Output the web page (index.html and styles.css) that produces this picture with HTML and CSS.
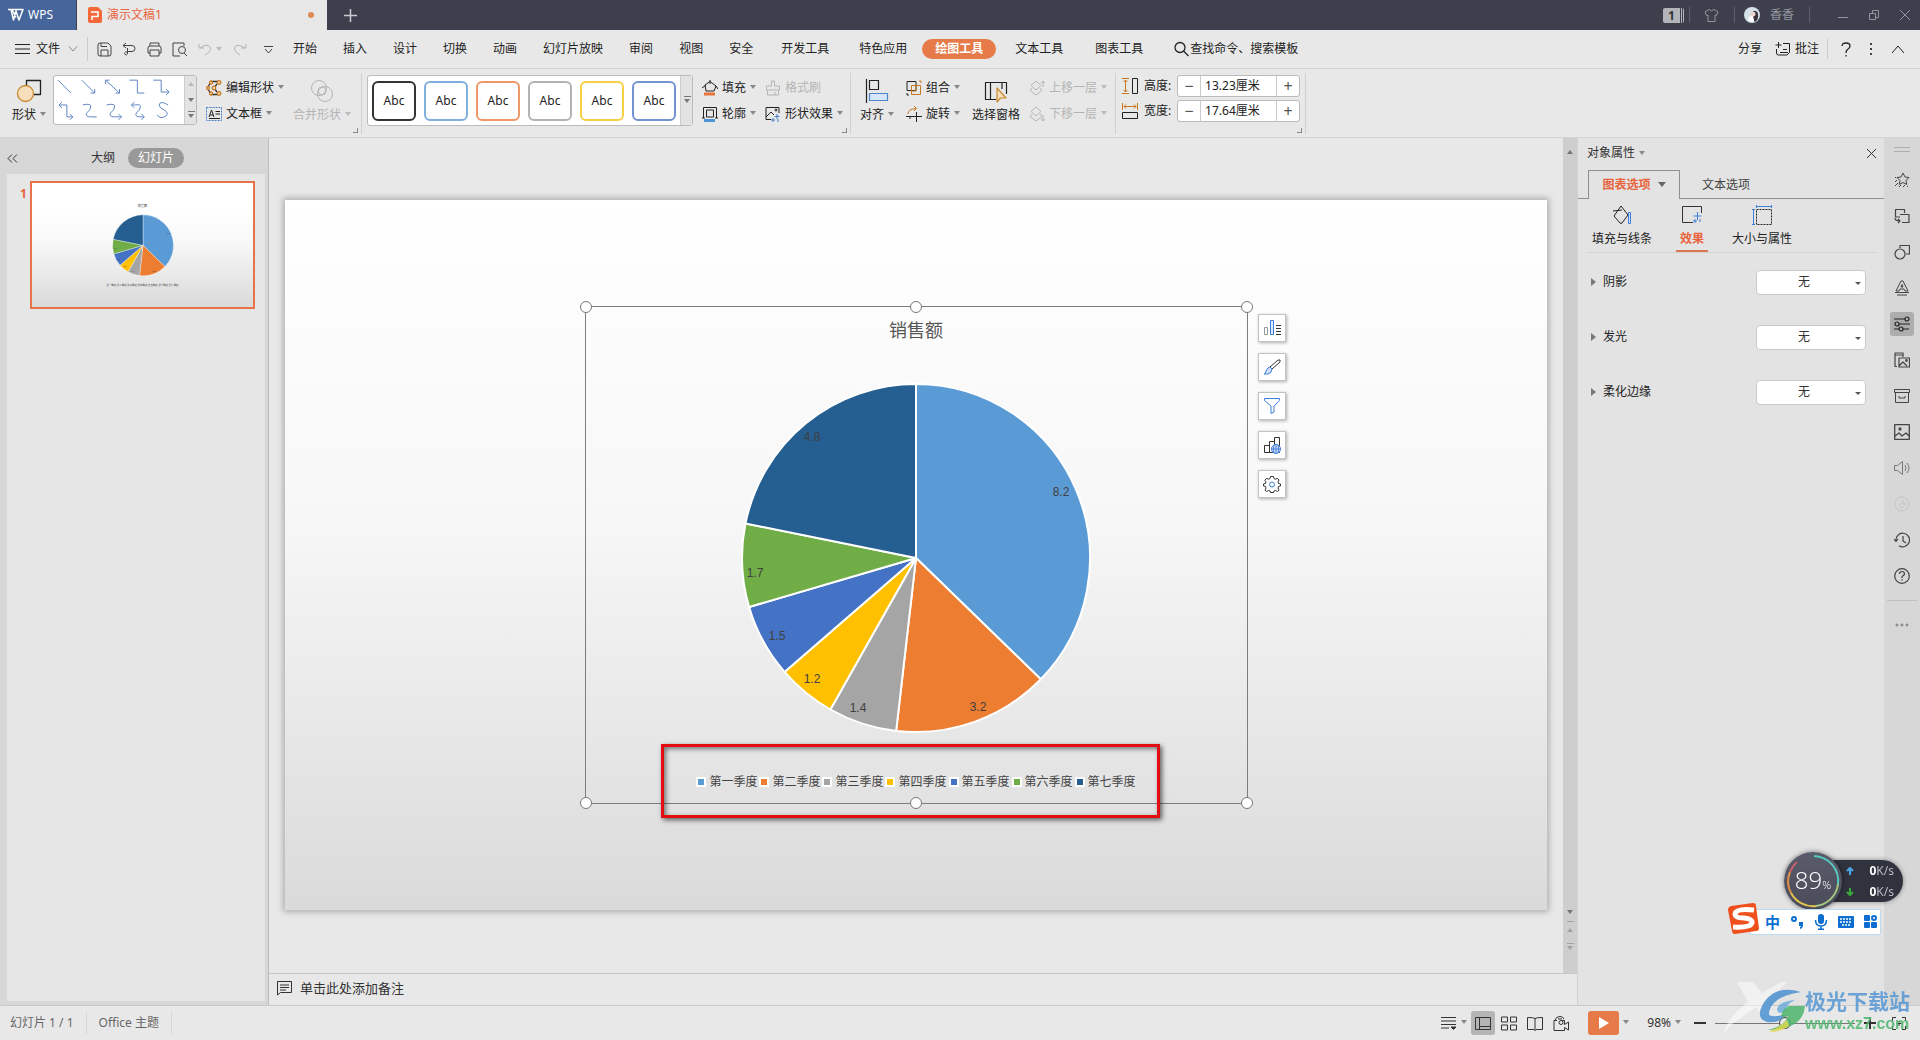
FILE: index.html
```html
<!DOCTYPE html>
<html lang="zh-CN">
<head>
<meta charset="utf-8">
<title>演示文稿1 - WPS</title>
<link rel="stylesheet" href="styles.css">
</head>
<body>
<header class="titlebar">
  <button class="wps"><svg class="i" width="17" height="14" viewBox="0 0 17 14" stroke-width="1.500"><path d="M1 1.500h3L6.500 12 9 3l3 9 4-10.500H5l4 8"/></svg>WPS</button>
  <button class="doc-tab"><svg width="14" height="16" viewBox="0 0 14 16"><path fill="#f5683a" d="M2 0h8l4 4v10a2 2 0 0 1-2 2H2a2 2 0 0 1-2-2V2a2 2 0 0 1 2-2z"/><path d="M4 13V9.500h6V5H3" fill="none" stroke="#fff" stroke-width="1.500"/></svg><span>演示文稿1</span><i class="dirty"></i></button>
  <button class="plus" aria-label="新建"><svg class="i" width="13" height="13" viewBox="0 0 13 13" stroke-width="1.500"><path d="M6.500 0v13M0 6.500h13"/></svg></button>
  <div class="title-right">
    <span class="badge">1</span>
    <button class="skin" aria-label="皮肤"><svg class="i" width="15" height="15" viewBox="0 0 15 15"><path d="M5 1.500 1 4l1.500 3.500 1.500-.5v6.500h7V7l1.500.5L14 4l-4-2.500q-2.500 2.500-5 0z"/></svg></button>
    <button class="user"><svg width="16" height="16" viewBox="0 0 16 16"><circle cx="8" cy="8" r="8" fill="#d5e2ea"/><path d="M9 4q4-1 5 3 1 5-3 8-2-2-2-5z" fill="#3a3239"/><circle cx="9" cy="7" r="2.500" fill="#ead4cb"/><path d="M4 12q2-4 5-3l1 5q-4 2-6-2z" fill="#fff"/></svg>香香</button>
    <button class="win" aria-label="最小化"><svg class="i" width="12" height="12" viewBox="0 0 12 12"><path d="M1 8.500h10"/></svg></button>
    <button class="win" aria-label="还原"><svg class="i" width="12" height="12" viewBox="0 0 12 12"><path d="M1.500 4.500h6v6h-6zM4.500 4V1.500h6v7H8"/></svg></button>
    <button class="win" aria-label="关闭"><svg class="i" width="12" height="12" viewBox="0 0 12 12"><path d="m1 1 10 10M11 1 1 11"/></svg></button>
  </div>
</header>

<nav class="menubar">
  <button class="file"><svg class="i" width="15" height="12" viewBox="0 0 15 12"><path d="M0 1.500h15M0 6h15M0 10.500h15"/></svg>文件<svg class="i dim" width="10" height="6" viewBox="0 0 10 6"><path d="m1 .5 4 4.500L9 .5"/></svg></button>
  <div class="quick">
    <button aria-label="保存"><svg class="i" width="15" height="15" viewBox="0 0 15 15"><path d="M1 3q0-2 2-2h8l3 3v8q0 2-2 2H3q-2 0-2-2zM4 14V8h7v6M4 1v3.500h6"/></svg></button>
    <button aria-label="输出"><svg class="i" width="15" height="15" viewBox="0 0 15 15"><path d="M1 3.500h9a3 3 0 0 1 0 6H5.500M4 1l-3 2.500L4 6M5.500 6v6a1.500 1.500 0 1 1-2-2h2"/></svg></button>
    <button aria-label="打印"><svg class="i" width="15" height="15" viewBox="0 0 15 15"><path d="M3 4V1h9v3M3 11H1V6q0-2 2-2h9q2 0 2 2v5h-2M3 8h9v6H3z"/></svg></button>
    <button aria-label="打印预览"><svg class="i" width="16" height="15" viewBox="0 0 16 15"><path d="M8 14H1V1h11v3M12 11l3 3"/><circle cx="10" cy="8" r="3.500"/></svg></button>
    <button class="off" aria-label="撤销"><svg class="i" width="14" height="14" viewBox="0 0 14 14"><path d="M1 2v4h5M2 6q7-5 10-1 2 4-5 8"/></svg><i class="caret"></i></button>
    <button class="off" aria-label="恢复"><svg class="i" width="14" height="14" viewBox="0 0 14 14"><path d="M13 2v4H8M12 6Q5 1 2 5q-2 4 5 8"/></svg></button>
    <button class="last" aria-label="更多"><svg class="i" width="9" height="9" viewBox="0 0 9 9"><path d="M0 1.500h9M1 4l3.500 4L8 4"/></svg></button>
  </div>
  <div class="tabs">
    <button>开始</button><button>插入</button><button>设计</button><button>切换</button><button>动画</button><button>幻灯片放映</button><button>审阅</button><button>视图</button><button>安全</button><button class="wide">开发工具</button><button class="wide">特色应用</button><button class="current">绘图工具</button><button class="wide">文本工具</button><button class="wide">图表工具</button>
  </div>
  <button class="find"><svg class="i" width="15" height="16" viewBox="0 0 15 16" stroke-width="1.300"><circle cx="6" cy="6.500" r="5"/><path d="m9.500 10 5 5"/></svg>查找命令、搜索模板</button>
  <div class="menu-right">
    <button>分享</button>
    <button><svg class="i" width="16" height="14" viewBox="0 0 16 14"><path d="M3.500 0v6M.5 3h6M1.500 7v4q0 2 2 2H12l2.500-2.500V1.500H8M5 10.500h8M8 7.500h4"/></svg>批注</button>
    <span class="vline"></span>
    <button aria-label="帮助"><svg class="i" width="10" height="15" viewBox="0 0 10 15" stroke-width="1.300"><path d="M1 4q0-3 4-3t4 3q0 2-2.500 3.500Q5 8.500 5 11M5 13v1.500"/></svg></button>
    <button aria-label="更多"><svg width="4" height="14" viewBox="0 0 4 14" fill="#444"><path d="M1 1h2v2H1zM1 6h2v2H1zM1 11h2v2H1z"/></svg></button>
    <button aria-label="收起"><svg class="i" width="14" height="9" viewBox="0 0 14 9"><path d="m1 8 6-7 6 7"/></svg></button>
  </div>
</nav>

<section class="ribbon">
  <div class="group g1">
    <button class="big"><svg class="i" width="26" height="24" viewBox="0 0 26 24" stroke-width="1.300"><path d="M10.500 1.500h14v14h-14z"/><circle cx="9.500" cy="14.500" r="8" fill="#f6dfba" stroke="#c8892f"/></svg><span>形状<i class="caret"></i></span></button>
    <div class="lines">
      <svg class="i" viewBox="0 0 131 48">
        <path d="m4 4 13 13M28 4l13 13v-4m0 4h-4M52 8V4h4m-4 0 14 13h-4m4 0v-4M76 4h8v13h7M100 4h8v12h8m-3-3 3 3-3 3"/>
        <path d="M5 29h8v12h6m-3-3 3 3-3 3M8 26l-3 3 3 3M29 29q9-2 8 2 0 3-4 6-2 4 4 4h6M53 29q9-2 8 2 0 3-4 6-2 4 4 4h7m-3-3 3 3-3 3M78 29h4q6-1 5 2 0 3-4 6-2 4 4 4h4m-3-3 3 3-3 3M81 26l-3 3 3 3M115 29q-8-5-9 0 0 3 5 5 5 3 2 6-6 4-9-1"/>
      </svg>
      <span class="spin3"><i class="tri up"></i><i class="tri"></i><i class="tri bar"></i></span>
    </div>
    <div class="col">
      <button class="tb"><svg class="i" width="16" height="16" viewBox="0 0 16 16" stroke="#c8791f" stroke-width="1.300"><path d="M12 1.500H5L1.500 8 5 14.500h7M11 4 8 8l3 4" stroke="#333"/><g fill="#f6dfba"><circle cx="13" cy="2.500" r="1.800"/><circle cx="8" cy="8" r="1.800"/><circle cx="13" cy="13.500" r="1.800"/><circle cx="2" cy="8" r="1.500"/><circle cx="5" cy="2.500" r="1.500"/><circle cx="5" cy="13.500" r="1.500"/></g></svg>编辑形状<i class="caret"></i></button>
      <button class="tb"><svg class="i" width="16" height="14" viewBox="0 0 16 14"><path stroke="#4a7cc9" stroke-dasharray="2 1" d="M.5.5h15v13H.5z"/><path d="M3 10l2.500-7L8 10M4 8h3M9.500 4.500H14M9.500 7H14M3 11.500h11"/></svg>文本框<i class="caret"></i></button>
    </div>
    <button class="big off"><svg class="i" width="24" height="24" viewBox="0 0 24 24"><circle cx="9" cy="9" r="7.500"/><circle cx="15" cy="15" r="7.500"/><circle cx="12" cy="12" r="4"/></svg><span>合并形状<i class="caret"></i></span></button>
    <i class="corner"></i>
  </div>
  <div class="group g2">
    <div class="styles">
      <button class="s-black">Abc</button><button class="s-blue">Abc</button><button class="s-orange">Abc</button><button class="s-gray">Abc</button><button class="s-gold">Abc</button><button class="s-navy">Abc</button>
      <span class="more"><i class="tri bar"></i></span>
    </div>
    <div class="col">
      <button class="tb"><svg class="i" width="16" height="16" viewBox="0 0 16 16"><path d="M8 1.500 3 5l1 6h8l2-5zM0 8l4-3M8 0v4M14 6l2 3"/><path stroke="#e8743c" stroke-width="3" d="M2 14h11"/></svg>填充<i class="caret"></i></button>
      <button class="tb"><svg class="i" width="16" height="16" viewBox="0 0 16 16"><path d="M1.500 12V1.500h13V12M4.500 11V4h7v7zM0 12h3M13 12h3"/><path stroke="#4d94d4" stroke-width="3" d="M2 14.500h11"/></svg>轮廓<i class="caret"></i></button>
    </div>
    <div class="col">
      <button class="tb off"><svg class="i" width="16" height="16" viewBox="0 0 16 16"><path d="M6.500 1h3v5h5v4h-13V6h5zM2.500 10v5h11v-5M10 15v-3"/></svg>格式刷</button>
      <button class="tb"><svg class="i" width="16" height="16" viewBox="0 0 16 16"><path d="M6 13.500H1v-12h13V7M1 11l5-5 3 3"/><circle cx="11" cy="4" r="1"/><path stroke="#4a7cc9" d="M12 8v5M9.500 10.500h5M8 12v4M6 14h4M13 13v3"/></svg>形状效果<i class="caret"></i></button>
    </div>
    <i class="corner"></i>
  </div>
  <div class="group g3">
    <button class="big"><svg class="i" width="24" height="24" viewBox="0 0 24 24" stroke-width="1.200"><path d="M1.500 0v24M4.500 1.500h9v9h-9z"/><path fill="#d7e6f8" stroke="#4a86c9" d="M4.500 14.500h18v7h-18z"/></svg><span>对齐<i class="caret"></i></span></button>
    <div class="col">
      <button class="tb"><svg class="i" width="16" height="16" viewBox="0 0 16 16"><path d="M1 1.500h9v9H1zM1 13v2h2"/><path stroke="#c8791f" d="M5.500 5.500h9v9h-9zM5 11h5V6M13 1h2v2"/></svg>组合<i class="caret"></i></button>
      <button class="tb"><svg class="i" width="16" height="16" viewBox="0 0 16 16"><path stroke="#c8791f" d="M2 8q0-5 8-5.500M8 0l2.500 2.500L8 5"/><path d="M0 10.500h16M10.500 6v10M4 10v3"/></svg>旋转<i class="caret"></i></button>
    </div>
    <button class="big"><svg class="i" width="24" height="24" viewBox="0 0 24 24" stroke-width="1.200"><path d="M12 20.500H1.500v-17h21V15M6.500 4v16M18 4v6"/><path fill="#f6dfba" stroke="#c8892f" d="M13 9v14l3.500-4H22z"/></svg><span>选择窗格</span></button>
    <div class="col">
      <button class="tb off"><svg class="i" width="16" height="16" viewBox="0 0 16 16"><path d="m7 1 5 4.500L7 10 2 5.500zM3 8l-2 2.500L7 15l6-4.500L11 8M14 7V1m-2 2 2-2 2 2"/></svg>上移一层<i class="caret"></i></button>
      <button class="tb off"><svg class="i" width="16" height="16" viewBox="0 0 16 16"><path d="m7 1 5 4.500L7 10 2 5.500zM3 8l-2 2.500L7 15l6-4.500L11 8M14 9v6m-2-2 2 2 2-2"/></svg>下移一层<i class="caret"></i></button>
    </div>
  </div>
  <div class="group g4">
    <div class="size"><svg class="i" width="16" height="16" viewBox="0 0 16 16"><path stroke="#c8791f" d="M0 .5h7M0 15.500h7M3.500 2v12M1.500 4l2-2 2 2m-4 8 2 2 2-2"/><path d="M10.500.5h5v15h-5z"/></svg><label for="h">高度:</label><span class="spin"><button>−</button><input id="h" value="13.23厘米"><button>+</button></span></div>
    <div class="size"><svg class="i" width="16" height="16" viewBox="0 0 16 16"><path stroke="#c8791f" d="M.5 0v7M15.500 0v7M2 3.500h12M4 1.500l-2 2 2 2m8-4 2 2-2 2"/><path d="M.5 9.500h15v6H.5z"/></svg><label for="w">宽度:</label><span class="spin"><button>−</button><input id="w" value="17.64厘米"><button>+</button></span></div>
    <i class="corner"></i>
  </div>
</section>

<main class="work">
  <aside class="outline">
    <div class="outline-head">
      <button aria-label="收起"><svg class="i" width="11" height="9" viewBox="0 0 11 9"><path d="m5 .5-4 4 4 4m5-8-4 4 4 4"/></svg></button>
      <button class="outl">大纲</button><button class="pill">幻灯片</button>
    </div>
    <div class="thumbs">
      <span class="num">1</span>
      <svg class="thumb" viewBox="0 0 1262 710">
        <text x="631" y="137" font-size="18" text-anchor="middle">销售额</text>
        <use href="#pie" x="634" y="356"/>
        <text x="631" y="587" font-size="14" text-anchor="middle">第一季度 第二季度 第三季度 第四季度 第五季度 第六季度 第七季度</text>
      </svg>
    </div>
  </aside>

  <section class="center">
    <div class="editor">
      <div class="stage">
        <div class="slide">
          <div class="chart">
            <h1>销售额</h1>
            <svg class="pie" viewBox="-176 -176 352 352">
              <g id="pie">
                <g stroke="#fff" stroke-width="2" stroke-linejoin="round">
                  <path fill="#5b9bd5" d="M0 0V-174A174 174 0 0 1 124.800 121.300z"/>
                  <path fill="#ed7d31" d="M0 0 124.800 121.300A174 174 0 0 1-19.800 172.900z"/>
                  <path fill="#a5a5a5" d="M0 0-19.800 172.900A174 174 0 0 1-85.600 151.500z"/>
                  <path fill="#ffc000" d="M0 0-85.600 151.500A174 174 0 0 1-131.500 113.900z"/>
                  <path fill="#4472c4" d="M0 0-131.500 113.900A174 174 0 0 1-166.900 49z"/>
                  <path fill="#70ad47" d="M0 0-166.900 49A174 174 0 0 1-170.500-34.600z"/>
                  <path fill="#255e91" d="M0 0-170.500-34.600A174 174 0 0 1 0-174z"/>
                </g>
                <g class="vals"><text x="145" y="-62">8.2</text><text x="62" y="153">3.2</text><text x="-58" y="154">1.4</text><text x="-104" y="125">1.2</text><text x="-139" y="82">1.5</text><text x="-161" y="19">1.7</text><text x="-104" y="-117">4.8</text></g>
              </g>
            </svg>
            <ul class="legend"><li class="c1">第一季度</li><li class="c2">第二季度</li><li class="c3">第三季度</li><li class="c4">第四季度</li><li class="c5">第五季度</li><li class="c6">第六季度</li><li class="c7">第七季度</li></ul>
            <i class="hd tl"></i><i class="hd tc"></i><i class="hd tr"></i><i class="hd bl"></i><i class="hd bc"></i><i class="hd br"></i>
            <div class="mark"></div>
            <div class="chart-tools">
              <button aria-label="图表元素"><svg class="i" width="18" height="18" viewBox="0 0 18 18"><path stroke="#999" d="M1.500 8.500h3v7h-3z"/><path stroke="#3f7ed8" fill="#dce9fb" d="M7.500 1.500h3v14h-3z"/><path d="M13 6.500h5M13 9.500h5M13 12.500h5M13 15.500h5"/></svg></button>
              <button aria-label="图表样式"><svg class="i" width="18" height="18" viewBox="0 0 18 18"><path d="m7 9 8-7q3-1 2 2l-8 7z"/><path stroke="#3f7ed8" fill="#cfe0f8" d="M1 16q2-1 2-3 2-4 4-4l2 2q0 4-4 5z"/></svg></button>
              <button aria-label="筛选"><svg class="i" width="18" height="18" viewBox="0 0 18 18" stroke="#3f7ed8"><path d="M1.500 1.500h15v2L11 9v6l-3 1.500V9L1.500 3.500z"/></svg></button>
              <button aria-label="图表类型"><svg class="i" width="18" height="18" viewBox="0 0 18 18"><path d="M1.500 9.500h5v7h-5zM6.500 5.500h5v11h-5zM11.500 1.500h5v15h-5z"/><g stroke="#3f7ed8"><circle cx="13" cy="13" r="4.500" fill="#dce9fb"/><path d="M8.500 13h9M13 8.500v9M11 9q-1 4 0 8M15 9q1 4 0 8"/></g></svg></button>
              <button aria-label="设置"><svg class="i" width="18" height="18" viewBox="0 0 18 18"><path d="m7.500 1.500-.5 2-1.500.7-2-.9-1.700 2L3 7l-.5 1.500-2 .5v2l2 .5.5 1.500-1 2 1.500 1.500 2-1 1.500.5.500 1.500h3l.5-1.500 1.500-.5 2 1 1.500-1.500-1-2 .5-1.500 2-.5V9l-2-.5L15 7l1-2-1.500-1.700-2 .9-1.500-.7-.5-2z"/><circle cx="9" cy="9.500" r="2.500" stroke="#3f7ed8"/></svg></button>
            </div>
          </div>
        </div>
      </div>
      <div class="scroll"><i class="tri up"></i><span><i class="tri"></i><i class="tri bar up lite"></i><i class="tri bar lite"></i></span></div>
    </div>
    <div class="notes"><svg class="i" width="17" height="16" viewBox="0 0 17 16"><path d="M1.500 15V1.500h14v11h-11zM4 5h9M4 7.500h9M4 10h6"/></svg>单击此处添加备注</div>
  </section>

  <aside class="props">
    <div class="props-head"><span>对象属性<i class="caret"></i></span><button aria-label="关闭"><svg class="i" width="11" height="11" viewBox="0 0 11 11"><path d="m1 1 9 9m0-9-9 9"/></svg></button></div>
    <div class="ptabs"><button class="on">图表选项<i class="caret"></i></button><button>文本选项</button></div>
    <div class="picons">
      <button><svg class="i" width="20" height="20" viewBox="0 0 20 20"><path d="m9 1 7 9-6 8q-1 1-2 0L2 11zM1 6l9-1"/><path stroke="#3f7ed8" fill="#cfe0f8" d="M16.500 7.500h2v11h-2z"/></svg>填充与线条</button>
      <button class="on"><svg class="i" width="20" height="20" viewBox="0 0 20 20"><path stroke="#333" d="M11 17.500H.5v-16h19V8"/><path stroke="#3f7ed8" d="M15.500 7v8M11.500 11h8M13 14v4M11 16h4M18 14v3"/></svg>效果</button>
      <button><svg class="i" width="20" height="20" viewBox="0 0 20 20"><path stroke-dasharray="2 1" d="M4.500 4.500h15v15h-15z"/><path stroke="#3f7ed8" d="M4.500 1.500h15M4.500 0v3M19.500 0v3M1.500 4.500v15M0 4.500h3M0 19.500h3"/></svg>大小与属性</button>
    </div>
    <div class="prow"><label for="p1">阴影</label><span class="sel"><select id="p1"><option>无</option></select></span></div>
    <div class="prow"><label for="p2">发光</label><span class="sel"><select id="p2"><option>无</option></select></span></div>
    <div class="prow"><label for="p3">柔化边缘</label><span class="sel"><select id="p3"><option>无</option></select></span></div>
  </aside>

  <aside class="rail">
    <i class="grip"></i>
    <button aria-label="新建"><svg class="i" width="16" height="16" viewBox="0 0 16 16"><path d="m9 1 2 4 4 .5-3 3 .7 4L9 10.500 5.300 12.500l.7-4-3-3L7 5zM1 10l2-2M1 14l3-3M5 15l2-2M9 15l2-2M13 15l1-1M1 6l1-1"/></svg></button>
    <button aria-label="切换"><svg class="i" width="16" height="16" viewBox="0 0 16 16" stroke-width="1.200"><path d="M6 9H1.500V1.500h9V5M6 6.500h9v8H8M1 10q0 3 5 3M4 11l2 2-2 2"/></svg></button>
    <button aria-label="形状"><svg class="i" width="16" height="16" viewBox="0 0 16 16" stroke-width="1.200"><circle cx="6" cy="10" r="5"/><path d="M6 4V1.500h9.500V10H12"/></svg></button>
    <button aria-label="艺术字"><svg class="i" width="16" height="16" viewBox="0 0 16 16"><path d="M2 11 7 1h2l5 10h-3l-1-2H6l-1 2zM7 7h2L8 4.500zM1 12.500h14M3 15h10"/></svg></button>
    <button class="on" aria-label="属性"><svg class="i" width="16" height="16" viewBox="0 0 16 16" stroke-width="1.200"><path d="M0 3h11M5 8h11M0 13h5M9 13h6"/><circle cx="13" cy="3" r="2"/><circle cx="3" cy="8" r="2"/><circle cx="7" cy="13" r="2"/></svg></button>
    <button aria-label="素材"><svg class="i" width="16" height="16" viewBox="0 0 16 16" stroke-width="1.200"><path d="M3 14.500H1V1h8v4M1 3h8M5 6h10.500v9H5zM5 14l4-4 4 4"/><circle cx="12.500" cy="8.500" r=".8"/></svg></button>
    <button aria-label="归档"><svg class="i" width="16" height="16" viewBox="0 0 16 16"><path d="M.5 1.500h15v3H.5zM1.500 4.500v10h13v-10M5 8v2h6V8"/></svg></button>
    <button aria-label="图片"><svg class="i" width="16" height="16" viewBox="0 0 16 16" stroke-width="1.300"><path d="M.7.7h14.600v14.600H.7zM1 12l4-3 3 3 4-3 3 3"/><circle cx="6" cy="5" r="1"/></svg></button>
    <button class="mid" aria-label="声音"><svg class="i" width="16" height="16" viewBox="0 0 16 16"><path d="M.5 5.500h3l5-4v13l-5-4h-3zM11 5q2 3 0 6M13 3q4 5 0 10"/></svg></button>
    <button class="off" aria-label="动画"><svg class="i" width="16" height="16" viewBox="0 0 16 16"><circle cx="8" cy="8" r="7"/><path d="m8 4 4 4-4 4-3-3 3-3 2 2"/></svg></button>
    <button aria-label="历史"><svg class="i" width="16" height="16" viewBox="0 0 16 16" stroke-width="1.200"><path d="M2 9a6.800 6.800 0 1 1 3 4.700M0 7l2 2.500L4 7M9 4v5l3 2"/></svg></button>
    <button aria-label="帮助"><svg class="i" width="16" height="16" viewBox="0 0 16 16" stroke-width="1.200"><circle cx="8" cy="8" r="7.300"/><path d="M5.500 6q0-2.500 2.500-2.500T10.500 6Q10.500 7 8 8.500V10M8 11v1.500"/></svg></button>
    <i class="rule"></i>
    <button class="mid" aria-label="更多"><svg class="i" width="14" height="4" viewBox="0 0 14 4"><circle cx="2" cy="2" r="1"/><circle cx="7" cy="2" r="1"/><circle cx="12" cy="2" r="1"/></svg></button>
  </aside>
</main>

<footer class="status">
  <span class="cell">幻灯片 1 / 1</span><span class="cell">Office 主题</span>
  <div class="status-right">
    <button class="dd" aria-label="备注"><svg class="i" width="16" height="14" viewBox="0 0 16 14"><path d="M0 1.500h15M0 5h15M0 8.500h15M0 12h8"/><path fill="#333" d="M10 11h5l-2.500 2.500z"/></svg><i class="caret"></i></button>
    <button class="view on" aria-label="普通"><svg class="i" width="16" height="15" viewBox="0 0 16 15"><path d="M.5 1.500h15v12H.5zM4.500 1.500v12M4.500 10.500h11"/></svg></button>
    <button class="view" aria-label="浏览"><svg class="i" width="16" height="15" viewBox="0 0 16 15"><path d="M.5 1h6v5h-6zM9.500 1h6v5h-6zM.5 9h6v5h-6zM9.500 9h6v5h-6z"/></svg></button>
    <button class="view" aria-label="阅读"><svg class="i" width="16" height="15" viewBox="0 0 16 15"><path d="M8 2.500q-1-1-7.500-1v12H7l1 1 1-1h6.500v-12q-6.500 0-7.500 1v12"/></svg></button>
    <button class="view" aria-label="录制"><svg class="i" width="17" height="15" viewBox="0 0 17 15"><path d="M4 4.500H1v10h10.500v-3l4 2.500V6l-4 2.500v-4H9M2 4q1-3.500 5-3.500 3 0 4 2.500M5 3h4"/><circle cx="8" cy="6.500" r="2"/></svg></button>
    <button class="play" aria-label="放映"><svg width="10" height="12" viewBox="0 0 10 12"><path fill="#fff" d="M0 0v12l10-6z"/></svg></button><i class="caret"></i>
    <button class="pct">98%<i class="caret"></i></button>
    <button aria-label="缩小"><svg class="i" width="12" height="12" viewBox="0 0 12 12" stroke-width="2"><path d="M0 6h12"/></svg></button>
    <input class="zoom" type="range" min="10" max="186" value="98" aria-label="缩放">
    <button aria-label="放大"><svg class="i" width="12" height="12" viewBox="0 0 12 12" stroke-width="2"><path d="M0 6h12M6 0v12"/></svg></button>
    <button class="fit" aria-label="适应窗口"><svg class="i" width="14" height="13" viewBox="0 0 14 13"><path d="M.5 4V.5H4M10 .5h3.500V4M13.500 9v3.500H10M4 12.500H.5V9M7 4v5M4.500 6.500h5"/></svg></button>
  </div>
</footer>

<div class="meter">
  <div class="speed"><span><svg class="i" width="8" height="8" viewBox="0 0 8 8" stroke="#4aa6e8" stroke-width="2"><path d="M4 8V1M1 4l3-3 3 3"/></svg><b>0</b>K/s</span><span><svg class="i" width="8" height="8" viewBox="0 0 8 8" stroke="#3aa83a" stroke-width="2"><path d="M4 0v7M1 4l3 3 3-3"/></svg><b>0</b>K/s</span></div>
  <div class="dial"><svg width="58" height="58" viewBox="-29 -29 58 58" fill="none" stroke-width="2"><path stroke="#58c7bd" d="M1-25A25 25 0 0 1 25 3"/><path stroke="#a3c982" d="M25 3A25 25 0 0 1 3 25"/><path stroke="#e2c64f" d="M3 25A25 25 0 0 1-22 12"/><path stroke="#e29049" d="M-22 12A25 25 0 0 1-23-9"/><path stroke="#c7606a" d="M-23-9A25 25 0 0 1-16-19"/></svg><span>89<small>%</small></span></div>
</div>
<div class="ime">
  <svg class="sogou" width="32" height="32" viewBox="0 0 32 32"><path fill="#f0501e" d="M3 3 25 0q3 0 3 3l3 22q0 3-3 3L7 31q-3 0-3-3L0 7q0-3 3-4z"/><path fill="none" stroke="#fff" stroke-width="5" d="M26 7Q8 5 7 11q0 4 9 4 9 1 8 5-2 5-19 4"/></svg>
  <b>中</b>
  <svg width="14" height="14" viewBox="0 0 14 14"><circle cx="4" cy="4" r="2" fill="none" stroke="#0b6ed0" stroke-width="2"/><path fill="#0b6ed0" d="M9 7h4v3q0 3-3 4v-2q1 0 1-1H9z"/></svg>
  <svg width="14" height="16" viewBox="0 0 14 16"><rect x="4" y="0" width="6" height="10" rx="3" fill="#0b6ed0"/><path fill="none" stroke="#0b6ed0" stroke-width="1.500" d="M1.500 6q0 6 5.500 6t5.500-6M7 12v3M4 15.200h6"/></svg>
  <svg width="16" height="12" viewBox="0 0 16 12"><rect width="16" height="12" rx="1" fill="#0b6ed0"/><path stroke="#fff" stroke-width="1.500" stroke-dasharray="2 1" d="M2 3h12M2 6h12M4 9h8"/></svg>
  <svg width="14" height="14" viewBox="0 0 14 14" fill="#0b6ed0"><rect width="6" height="6" rx="1"/><rect y="7" width="6" height="6" rx="1"/><rect x="7" y="7" width="6" height="6" rx="1"/><circle cx="10" cy="3" r="2" fill="none" stroke="#0b6ed0" stroke-width="2"/></svg>
</div>
<div class="brand">
  <svg width="82" height="54" viewBox="0 0 82 54"><path fill="#fff" opacity=".5" d="M14 2h16l9 11L58 2h6L44 22l4 12H38l-5-7L12 42Q6 46 1 54q2-16 24-32z"/><path fill="#4a8fd0" opacity=".85" d="M78 12Q52 4 40 24q-8 14 4 18 14 2 18-8-10 4-16 1 0-18 32-23z"/><path fill="#65a9d8" opacity=".8" d="M72 20q-18 2-18 10 2 6 10 0-2-5 8-10z"/><path fill="#4db56a" opacity=".85" d="M66 26h16q-2 24-38 24 18-4 21-14-3 2-7 0 2-8 8-10z"/><path fill="#e3d84c" opacity=".8" d="M46 52q12-6 18-12l2 6q-8 6-20 6z"/></svg>
  <div><strong>极光下载站</strong><em>www.xz7.com</em></div>
</div>
</body>
</html>
```
FILE: styles.css
```css
*, *::before, *::after { box-sizing: border-box; }
body { margin: 0; height: 100vh; display: flex; flex-direction: column; overflow: hidden; background: #e8e8e8; color: #333; font: 12px/18px "Noto Sans", "Noto Sans CJK SC", sans-serif; }
button { margin: 0; padding: 0; border: 0; background: none; color: inherit; font: inherit; white-space: nowrap; display: flex; align-items: center; justify-content: center; }
svg { flex: none; display: block; }
.i { fill: none; stroke-linejoin: round; }
.i:not([stroke]) { stroke: currentColor; }
.off { color: #b5b5b5; }
.caret { display: inline-block; flex: none; border: 3px solid transparent; border-top: 4px solid #888; border-bottom: 0; margin: 0 0 2px 4px; }
.off .caret { border-top-color: #bbb; }
.tri { width: 0; height: 0; border: 3px solid transparent; border-top: 4px solid #777; border-bottom: 0; }
.tri.up { border-top: 0; border-bottom: 4px solid #777; }
.tri.bar { position: relative; }
.tri.bar::before { content: ""; position: absolute; left: -3px; top: -7px; width: 7px; height: 1px; background: #777; }

.titlebar { display: flex; height: 30px; background: #3d404c; color: #b5b8c0; flex: none; }
.wps { width: 76px; background: #46659b; color: #fff; gap: 4px; padding-right: 16px; margin-right: 1px; }
.doc-tab { width: 250px; background: #e8e8e8; color: #e8643c; gap: 5px; padding: 0 13px 0 11px; }
.doc-tab span { flex: 1; text-align: left; }
.dirty { width: 6px; height: 6px; border-radius: 3px; background: #dc8b55; }
.plus { width: 46px; color: #c9cbd0; }
.title-right { margin-left: auto; display: flex; align-items: center; color: #92959d; }
.badge { width: 21px; height: 15px; line-height: 15px; background: linear-gradient(90deg, #b3b5bb 17px, #3d404c 17px 18px, #b3b5bb 18px 19px, #3d404c 19px 20px, #b3b5bb 20px); color: #333; padding-left: 5px; border-radius: 2px; font-weight: bold; }
.skin { width: 46px; height: 16px; margin-left: 5px; border: solid #5c5f6a; border-width: 0 1px; }
.user { height: 16px; gap: 10px; padding: 0 15px 0 9px; border-right: 1px solid #5c5f6a; margin-right: 17px; }
.win { width: 31px; }

.menubar { display: flex; height: 39px; border-bottom: 1px solid #d3d3d3; flex: none; align-items: center; color: #222; }
.file { gap: 6px; padding: 0 9px 0 15px; height: 24px; border-right: 1px solid #ccc; }
.dim { color: #888; margin-left: 2px; }
.quick { display: flex; padding-left: 9px; color: #444; width: 192px; gap: 10px; }
.quick .caret { margin: 0 0 0 4px; }
.quick .off + .off { margin-left: 1px; }
.quick .last { margin-left: 7px; }
.tabs { display: flex; align-items: center; }
.tabs button { padding: 0 13px; height: 20px; }
.tabs .wide { padding: 0 15px; }
.tabs .current { background: #e67a48; color: #fff; font-weight: bold; border-radius: 10px; margin-right: 4px; }
.tabs .current + .wide { margin-right: 2px; }
.find { margin-left: 16px; gap: 1px; }
.menu-right { margin-left: auto; display: flex; align-items: center; padding-right: 15px; gap: 13px; }
.menu-right button { gap: 4px; }
.menu-right button:nth-last-child(-n+2) { margin-left: 5px; }
.vline { width: 1px; height: 20px; background: #ccc; margin-left: -5px; }

.ribbon { display: flex; height: 68px; color: #222; flex: none; }
.group { position: relative; display: flex; padding: 0 8px; }
.group::after { content: ""; position: absolute; right: 0; top: 4px; bottom: 3px; width: 1px; background: #d0d0d0; }
.corner { position: absolute; right: 4px; bottom: 4px; width: 5px; height: 5px; border: solid #888; border-width: 0 1px 1px 0; }
.big { flex-direction: column; gap: 3px; height: 54px; margin-top: 10px; justify-content: flex-start; }
.big span { display: flex; align-items: center; }
.col { display: flex; flex-direction: column; gap: 8px; padding-top: 10px; align-items: flex-start; }
.tb { height: 18px; gap: 4px; }
.tb .caret { margin-left: 0; }
.g1 .big { width: 42px; margin-right: 3px; }
.g1 .big.off { width: 60px; margin: 10px 2px 0 8px; }
.lines { display: flex; width: 144px; height: 50px; margin: 6px 9px 0 0; border: 1px solid #bbb; border-radius: 3px; background: #fff; color: #6186c4; overflow: hidden; }
.lines svg { width: 130px; height: 48px; }
.spin3 { width: 12px; background: #e3e3e3; border-left: 1px solid #ccc; display: flex; flex-direction: column; align-items: center; justify-content: space-around; }
.spin3 .tri.up { opacity: .4; }
.g2 { padding-left: 5px; gap: 9px; }
.styles { display: flex; width: 326px; height: 51px; margin-top: 6px; border: 1px solid #bbb; border-radius: 3px; background: #fff; padding: 5px 0 0 4px; gap: 8px; }
.styles button { width: 44px; height: 40px; border: 2px solid; border-radius: 6px; flex: none; }
.styles .s-black { border-color: #333; }
.styles .s-blue { border-color: #7fb0e0; }
.styles .s-orange { border-color: #ec9868; }
.styles .s-gray { border-color: #b3b3b3; }
.styles .s-gold { border-color: #f8ce45; }
.styles .s-navy { border-color: #7494d1; }
.more { margin: -5px 0 0 -4px; background: #e3e3e3; border-left: 1px solid #ccc; display: flex; align-items: center; justify-content: center; flex: 1; }
.g3 { padding: 0 9px 0 3px; }
.g3 .big { width: 46px; margin-right: 6px; }
.g3 .col + .big { width: 54px; margin: 10px 6px 0 9px; }
.g4 { flex-direction: column; padding: 6px 6px 0; gap: 3px; }
.size { display: flex; align-items: center; height: 22px; }
.size label { width: 33px; margin-left: 6px; }
.spin { display: flex; width: 123px; height: 22px; border: 1px solid #bbb; border-radius: 3px; background: #fff; }
.spin button { width: 22px; font-size: 16px; color: #555; }
.spin input { flex: 1; min-width: 0; border: solid #ccc; border-width: 0 1px; padding: 0 4px; font: inherit; color: inherit; background: none; }

.work { flex: 1; min-height: 0; display: flex; border-top: 1px solid #d4d4d4; }
.outline { width: 269px; flex: none; background: #d7d7d7; border-right: 1px solid #bdbdbd; display: flex; flex-direction: column; padding: 0 3px 4px 7px; }
.outline-head { display: flex; align-items: center; height: 36px; padding-top: 4px; flex: none; }
.outline-head .outl { margin: 0 13px 0 73px; }
.pill { width: 56px; height: 20px; border-radius: 10px; background: #999; color: #fff; }
.thumbs { flex: 1; background: #e6e6e6; padding: 7px 10px 0 13px; display: flex; align-items: flex-start; }
.num { width: 10px; padding-top: 4px; color: #e8643c; font-weight: bold; }
.thumb { flex: 1; min-width: 0; border: 2px solid #e8734a; background: linear-gradient(#fff 20%, #f7f7f7 50%, #dadada); fill: #444; }
.center { flex: 1; min-width: 0; display: flex; flex-direction: column; }
.editor { flex: 1; display: flex; min-height: 0; }
.stage { flex: 1; min-width: 0; display: flex; padding: 62px 16px 63px; background: #e8e8e8; }
.slide { flex: 1; display: grid; place-items: center; background: linear-gradient(#fff, #f7f7f7 45%, #dadada); box-shadow: 0 0 6px 2px rgba(0,0,0,.25); }
.chart { position: relative; width: 663px; height: 498px; border: 1px solid #7d7d7d; display: flex; flex-direction: column; align-items: center; padding-top: 10px; }
h1 { margin: 0; font: 18px/24px "Noto Sans CJK SC", sans-serif; color: #555; }
.pie { width: 352px; height: 352px; margin: 41px 0 40px; }
.vals { font: 12px "Liberation Sans", sans-serif; fill: #404040; text-anchor: middle; }
.legend { display: flex; gap: 2px; margin: 0; padding: 0; list-style: none; line-height: 16px; color: #444; }
.legend li { display: flex; align-items: center; gap: 3px; white-space: nowrap; }
.legend li::before { content: ""; width: 10px; height: 10px; border: 2px solid #fff; background: var(--c); }
.c1 { --c: #5b9bd5; }
.c2 { --c: #ed7d31; }
.c3 { --c: #a5a5a5; }
.c4 { --c: #ffc000; }
.c5 { --c: #4472c4; }
.c6 { --c: #70ad47; }
.c7 { --c: #255e91; }
.hd { position: absolute; width: 12px; height: 12px; border: 1px solid #777; border-radius: 6px; background: #fff; }
.tl, .tc, .tr { top: -6px; }
.bl, .bc, .br { bottom: -6px; }
.tl, .bl { left: -6px; }
.tr, .br { right: -6px; }
.tc, .bc { left: calc(50% - 6px); }
.mark { position: absolute; left: 75px; top: 437px; width: 499px; height: 74px; border: 3px solid #e20c12; box-shadow: 2px 2px 5px rgba(0,0,0,.6), inset 2px 2px 5px rgba(0,0,0,.5); }
.chart-tools { position: absolute; left: 672px; top: 7px; display: flex; flex-direction: column; gap: 11px; }
.chart-tools button { width: 28px; height: 28px; background: #fff; border: 1px solid #c3c3c3; box-shadow: 1px 1px 3px rgba(0,0,0,.3); }
.scroll { width: 14px; background: #cecece; display: flex; flex-direction: column; justify-content: space-between; align-items: center; padding: 12px 0 23px; }
.scroll span { display: flex; flex-direction: column; gap: 14px; }
.lite { opacity: .5; }
.notes { height: 32px; flex: none; border-top: 1px solid #c6c6c6; display: flex; align-items: center; gap: 7px; padding: 0 0 4px 7px; font-size: 13px; }
.props { width: 307px; flex: none; background: #e3e3e3; border-left: 1px solid #d0d0d0; }
.props-head { display: flex; justify-content: space-between; padding: 6px 7px 0 9px; height: 32px; align-items: flex-start; }
.props-head button { height: 18px; }
.ptabs { display: flex; height: 29px; padding-left: 10px; background: linear-gradient(#8f8f8f, #8f8f8f) 0 100% / 100% 1px no-repeat; }
.ptabs button { width: 110px; color: #444; padding-right: 18px; }
.ptabs .on { width: 92px; padding: 0; color: #e8643c; border: 1px solid #8f8f8f; border-bottom: 0; background: #e3e3e3; font-weight: bold; }
.ptabs .on .caret { border-width: 5px 4px 0; border-top-color: #666; margin-left: 7px; }
.picons { display: flex; gap: 24px; margin: 0 8px 0 9px; padding: 6px 0 0 5px; border-bottom: 1px solid #d3d3d3; }
.picons button { flex-direction: column; gap: 5px; height: 47px; justify-content: flex-start; color: #222; }
.picons .on { color: #e8643c; font-weight: bold; padding: 0 4px; border-bottom: 2px solid #d97755; }
.prow { display: flex; justify-content: space-between; align-items: center; height: 24px; margin: 17px 18px 31px 13px; }
.prow + .prow { margin-top: 31px; }
.prow label { display: flex; align-items: center; color: #222; }
.prow label::before { content: ""; border: 4px solid transparent; border-left: 5px solid #777; border-right: 0; margin-right: 7px; }
.sel { position: relative; width: 110px; height: 25px; }
.sel::after { content: ""; position: absolute; right: 5px; top: 12px; border: 3px solid transparent; border-top-color: #555; border-bottom: 0; }
select { appearance: none; width: 100%; height: 100%; border: 1px solid #c9c9c9; border-radius: 4px; background: #fff; font: inherit; color: #333; text-align-last: center; padding: 0 14px 0 0; }
.rail { width: 36px; flex: none; background: #d7d7d7; display: flex; flex-direction: column; align-items: center; gap: 12px; padding-top: 9px; color: #444; }
.rail button { width: 24px; height: 24px; border-radius: 3px; }
.rail .on { background: #adadad; color: #222; }
.rail .mid { color: #777; }
.rail .off { color: #c4c4c4; }
.grip { width: 16px; height: 5px; border: solid #b0b0b0; border-width: 1px 0; margin-bottom: 4px; }
.rule { width: 30px; height: 1px; background: #c0c0c0; }

.status { display: flex; height: 35px; align-items: center; border-top: 1px solid #c9c9c9; color: #666; flex: none; }
.cell { padding: 2px 12px 2px 10px; border-right: 1px solid #d6d6d6; }
.cell + .cell { padding-left: 12px; }
.status-right { margin-left: auto; display: flex; align-items: center; padding-right: 14px; color: #333; }
.dd { margin-right: 4px; }
.dd .caret { margin-left: 4px; }
.view { width: 24px; height: 24px; margin-right: 2px; border-radius: 3px; }
.view.on { background: #b5b5b5; margin-right: 2px; }
.play { width: 31px; height: 24px; border-radius: 3px; background: #e67a48; margin-left: 13px; }
.pct { margin: 0 13px 0 18px; }
.zoom { appearance: none; width: 140px; height: 14px; margin: 0 9px; background: linear-gradient(#777, #777) 0 7px / 100% 1px no-repeat; }
.zoom::-webkit-slider-thumb { appearance: none; width: 12px; height: 12px; border: 1px solid #444; border-radius: 6px; background: #e8e8e8; }
.fit { margin-left: 16px; }

.meter { position: fixed; right: 17px; bottom: 130px; width: 119px; height: 58px; display: flex; align-items: center; justify-content: flex-end; }
.speed { width: 84px; height: 42px; border-radius: 0 21px 21px 0; background: #30323e; color: #b5b8c0; display: flex; flex-direction: column; justify-content: center; gap: 3px; padding: 0 9px 0 27px; box-shadow: 0 0 5px rgba(0,0,0,.4); }
.speed span { display: flex; align-items: center; }
.speed b { color: #fff; margin-left: auto; font-size: 12px; }
.dial { position: absolute; left: 0; top: 0; width: 58px; height: 58px; border-radius: 29px; background: linear-gradient(#5b5c6b, #4a4b59); box-shadow: 0 0 5px rgba(0,0,0,.5); }
.dial span { position: absolute; inset: 0; text-align: center; line-height: 56px; font-size: 24px; font-family: "Open Sans", sans-serif; font-weight: 300; color: #fff; }
.dial small { font-size: 11px; }
.ime { position: fixed; right: 39px; bottom: 105px; width: 131px; height: 26px; background: #fff; border: 1px solid #bcd9f2; border-radius: 2px; display: flex; align-items: center; gap: 10px; padding-left: 14px; color: #0b6ed0; }
.ime b { font-size: 15px; }
.sogou { position: absolute; left: -23px; bottom: -1px; }
.brand { position: fixed; right: 10px; bottom: 6px; display: flex; align-items: flex-end; }
.brand div { display: flex; flex-direction: column; }
.brand strong { font: bold 21px/28px "Noto Sans CJK SC", sans-serif; color: #5e9bd3; opacity: .9; }
.brand em { font: bold 16px/20px "Liberation Sans", sans-serif; color: #58b974; opacity: .9; }
```
